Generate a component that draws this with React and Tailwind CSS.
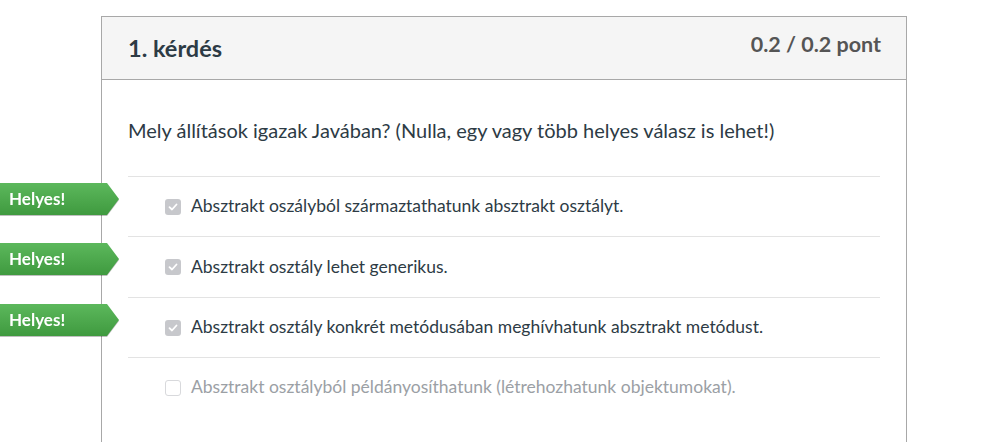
import React from "react";

const answers = [
  { text: "Absztrakt oszályból származtathatunk absztrakt osztályt.", checked: true, h: "h-[60px]" },
  { text: "Absztrakt osztály lehet generikus.", checked: true, h: "h-[61px]" },
  { text: "Absztrakt osztály konkrét metódusában meghívhatunk absztrakt metódust.", checked: true, h: "h-[60px]" },
  { text: "Absztrakt osztályból példányosíthatunk (létrehozhatunk objektumokat).", checked: false, h: "h-[60px]" },
];

const CorrectTag = () => (
  <div className="absolute left-0 top-[7px] flex h-8 items-stretch drop-shadow-[0_1px_0_rgba(0,0,0,0.25)]">
    <div className="flex w-[107px] items-center bg-gradient-to-b from-[#5cb85c] to-[#3f9a3f] pl-[9px] text-[17px] font-bold text-white">
      Helyes!
    </div>
    <svg width="12" height="32" viewBox="0 0 12 32" className="block">
      <defs>
        <linearGradient id="tagg" x1="0" y1="0" x2="0" y2="1">
          <stop offset="0" stopColor="#5cb85c" />
          <stop offset="1" stopColor="#3f9a3f" />
        </linearGradient>
      </defs>
      <path d="M0 0 L0 32 L12 16 Z" fill="url(#tagg)" />
    </svg>
  </div>
);

const Checkbox = ({ checked }) =>
  checked ? (
    <span className="flex h-4 w-4 shrink-0 items-center justify-center rounded-[3px] bg-[#c7c8cc]">
      <svg width="10" height="10" viewBox="0 0 10 10">
        <path d="M1.5 5.2 L4 7.5 L8.5 2.5" stroke="#fff" strokeWidth="1.8" fill="none" strokeLinecap="round" strokeLinejoin="round" />
      </svg>
    </span>
  ) : (
    <span className="block h-4 w-4 shrink-0 rounded-[3px] border border-[#d8d9dc] bg-white" />
  );

export default function App() {
  return (
    <div className="relative min-h-[442px] bg-white pt-4 font-['Lato','Noto_Sans',sans-serif]">
      <div className="ml-[101px] w-[806px] border border-b-0 border-[#a8a8a8]">
        <div className="flex h-[63px] items-start justify-between border-b border-[#a8a8a8] bg-[#f5f5f5] pl-[26px] pr-[25px]">
          <h2 className="mt-[14px] text-[23.5px] font-bold text-[#2d3b45]">1. kérdés</h2>
          <div className="mt-[11px] text-[21.5px] font-bold text-[#555]">0.2 / 0.2 pont</div>
        </div>
        <div className="px-[26px] pb-10">
          <p className="pt-[36px] pb-[32px] text-[20px] leading-7 text-[#2d3b45]">
            Mely állítások igazak Javában? (Nulla, egy vagy több helyes válasz is lehet!)
          </p>
          {answers.map((a, i) => (
            <div key={i} className={`flex ${a.h} items-center border-t border-[#e3e3e3] pl-[37px]`}>
              <Checkbox checked={a.checked} />
              <span className={`ml-[10px] text-[17.5px] ${a.checked ? "text-[#2d3b45]" : "text-[#9ba0a5]"}`}>
                {a.text}
              </span>
            </div>
          ))}
        </div>
      </div>
      <div className="pointer-events-none absolute left-0 top-[176px] w-full">
        {answers.map((a, i) => (
          <div key={i} className={`relative ${a.h}`}>
            {a.checked && <CorrectTag />}
          </div>
        ))}
      </div>
    </div>
  );
}
